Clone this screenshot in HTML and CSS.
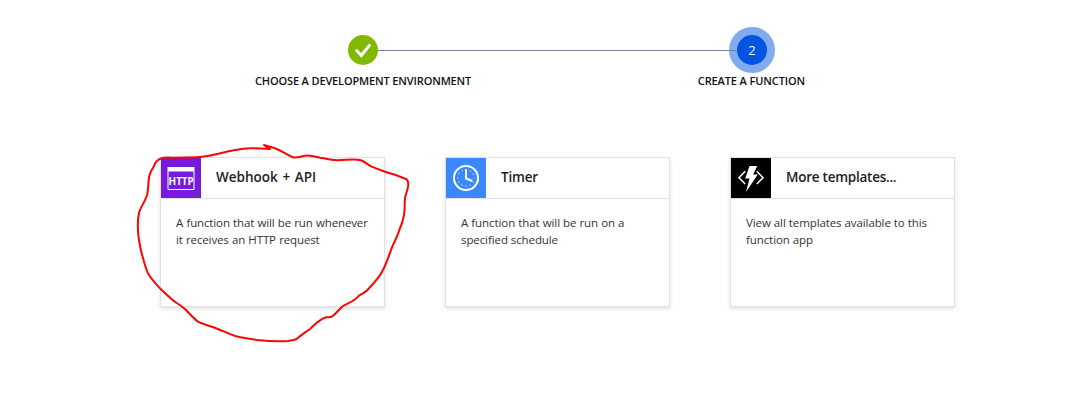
FILE: index.html
```
<!DOCTYPE html>
<html lang="en">
<head>
<meta charset="utf-8">
<title>Create a function</title>
<link rel="stylesheet" href="styles.css">
</head>
<body>
<main class="page">
  <section class="stepper">
    <div class="track">
      <span class="dot done"><svg width="30" height="30" viewBox="0 0 30 30"><path d="M7.800 14.800 13.300 20.400 22.200 9.400" fill="none" stroke="#fff" stroke-width="3"/></svg></span>
      <span class="line"></span>
      <span class="dot current">2</span>
    </div>
    <div class="labels">
      <span class="label choose">CHOOSE A DEVELOPMENT ENVIRONMENT</span>
      <span class="label create">CREATE A FUNCTION</span>
    </div>
  </section>
  <section class="cards">
    <article class="card">
      <header class="head">
        <svg class="icon http" width="40" height="40" viewBox="0 0 40 40"><path d="M6.500 9h27v4.500h-27z" fill="#fff"/><path d="M7 13v18.500h26V13" fill="none" stroke="#fff" stroke-width="1"/><text x="7.600" y="26.500" textLength="25.200" lengthAdjust="spacingAndGlyphs" class="icon-text">HTTP</text></svg>
        <h2 class="title webhook">Webhook + API</h2>
      </header>
      <p class="body"><span class="w1">A function that will be run whenever</span><br><span class="w2">it receives an HTTP request</span></p>
    </article>
    <article class="card">
      <header class="head">
        <svg class="icon timer" width="40" height="40" viewBox="0 0 40 40"><circle cx="20" cy="20" r="12" fill="none" stroke="#fff" stroke-width="2"/><path d="M20 11v9.500l6.300 2.500" fill="none" stroke="#fff" stroke-width="1.900"/><circle cx="20" cy="20" r="8.200" fill="none" stroke="#c9ddff" stroke-width="1.200" stroke-dasharray="1.200 3.094" stroke-dashoffset=".6"/></svg>
        <h2 class="title short">Timer</h2>
      </header>
      <p class="body"><span class="t1">A function that will be run on a</span><br><span class="t2">specified schedule</span></p>
    </article>
    <article class="card">
      <header class="head">
        <svg class="icon more" width="40" height="40" viewBox="0 0 40 40"><path d="M14.200 13.300 8 19.700l6.200 6.400M25.800 13.300l6.200 6.400-6.200 6.400" fill="none" stroke="#fff" stroke-width="1.500"/><path d="M18.500 8h7.700l-4 8.600h4.600L15 34l3.500-13.400h-4.300z" fill="#fff"/></svg>
        <h2 class="title templates">More templates...</h2>
      </header>
      <p class="body"><span class="m1">View all templates available to this</span><br><span class="m2">function app</span></p>
    </article>
  </section>
  <svg class="scribble" width="1084" height="400" viewBox="0 0 1084 400"><path d="M270 149C262 149 256 147.700 250 148.300C243 148.500 236 150 230 151C218 154 207 157 197 157.300L173 157.700C168 157.700 164 157 161 158.500C157 160 155 163 154 166C151 171 149 175 149 178C148 184 148.500 190 147 195C145 202 140 208 139 213C137 222 138 235 139 240C140 247 141.500 253 143 258C145 265 146 270 149 275C152 280 156 284 160.700 289C166 294 171 299 176.700 303C180 305 182 306.500 185 309C189 313 193 318 198 321.700C202 324 207 325 211.700 326.700C219 329 227 333 235 336C242 338 250 338.500 256.700 340C264 340.700 280 341.500 288 341C292 340.500 294 340 296.700 339C301 335 306 332 310 329C312 327 314 325 316.700 322.700C320 320.500 322 318.500 326 317.300C328 317 330 317.500 332 316.500C336 314 339 309 343 306C347 303.500 351 302.500 354 300C356 299 358 296.500 360 295C362 293.500 365 292.500 366.700 290.700C371 286.500 375 282 379 276.700C381 274 382.500 271 384 268C388 260 391 248 395 241C397 236 399 232 400 228C402 224 403 220 404 215C405 209 404.500 203 405 198C406 193 408 189 408.300 185C408.300 182 408 180 406 179C399 176 392 173.500 385 171.700C380 170 376 168.500 371.700 166.700C367 164 364 161 360 160C353 158.500 345 160.500 336.700 160.300C331 160 325 158.500 320 157.700C315 156.500 310 155 305 155.700C301 156.500 296 158.500 293 157.300C287 155 282 151 276.700 149C272 147 268 146.500 264 145L270 149" fill="none" stroke="#fa0505" stroke-width="2" stroke-linecap="round" stroke-linejoin="round"/></svg>
</main>
</body>
</html>
```
FILE: styles.css
```
* { box-sizing: border-box; }
body { margin: 0; background: #fff; color: #111; font-family: "Open Sans", "Noto Sans", sans-serif; }
.page { position: relative; width: 1084px; height: 400px; padding-top: 27px; overflow: hidden; }
.track { display: flex; align-items: center; height: 46px; width: 427px; margin-left: 348px; }
.dot { flex: none; display: flex; align-items: center; justify-content: center; border-radius: 50%; }
.done { width: 30px; height: 30px; background: #7fba00; }
.line { flex: 1; height: 1px; margin-right: -8px; background: #70869b; }
.current { width: 46px; height: 46px; border: 8px solid #82abef; background: #0355df; color: #fff; font-size: 13px; }
.line, .current { position: relative; }
.line { z-index: 1; }
.labels { display: flex; justify-content: space-between; width: 550px; margin-left: 255px; }
.label { font-size: 11px; line-height: 16px; font-weight: 600; color: #111; white-space: nowrap; }
.choose { letter-spacing: -.14px; }
.create { letter-spacing: -.12px; }
.cards { display: flex; gap: 60px; margin: 68px 0 0 160px; }
.card { width: 225px; height: 150px; border: 1px solid #e2e2e2; background: #fff; box-shadow: 0 2px 4px rgba(0, 0, 0, .12); }
.head { display: flex; height: 41px; border-bottom: 1px solid #e2e2e2; }
.icon { display: block; flex: none; }
.http { background: #761bdb; }
.timer { background: #3b87fc; }
.more { background: #000; }
.icon-text { fill: #fff; font: 700 10px "Open Sans", sans-serif; }
.title { margin: 0 0 0 15px; font-size: 13.5px; line-height: 39px; font-weight: 600; color: #222; white-space: nowrap; }
.webhook { letter-spacing: -.02px; word-spacing: 1.3px; }
.short { letter-spacing: -.2px; }
.templates { letter-spacing: -.25px; }
.body { margin: 15px 0 0 15px; font-size: 11.5px; line-height: 17px; color: #333; white-space: nowrap; }
.w1 { letter-spacing: -.13px; word-spacing: .4px; }
.w2 { letter-spacing: -.13px; word-spacing: .4px; }
.t1 { letter-spacing: -.08px; word-spacing: .2px; }
.t2 { letter-spacing: -.09px; }
.m1 { letter-spacing: -.1px; word-spacing: .2px; }
.m2 { letter-spacing: -.09px; }
.scribble { position: absolute; left: 0; top: 0; pointer-events: none; }
```
